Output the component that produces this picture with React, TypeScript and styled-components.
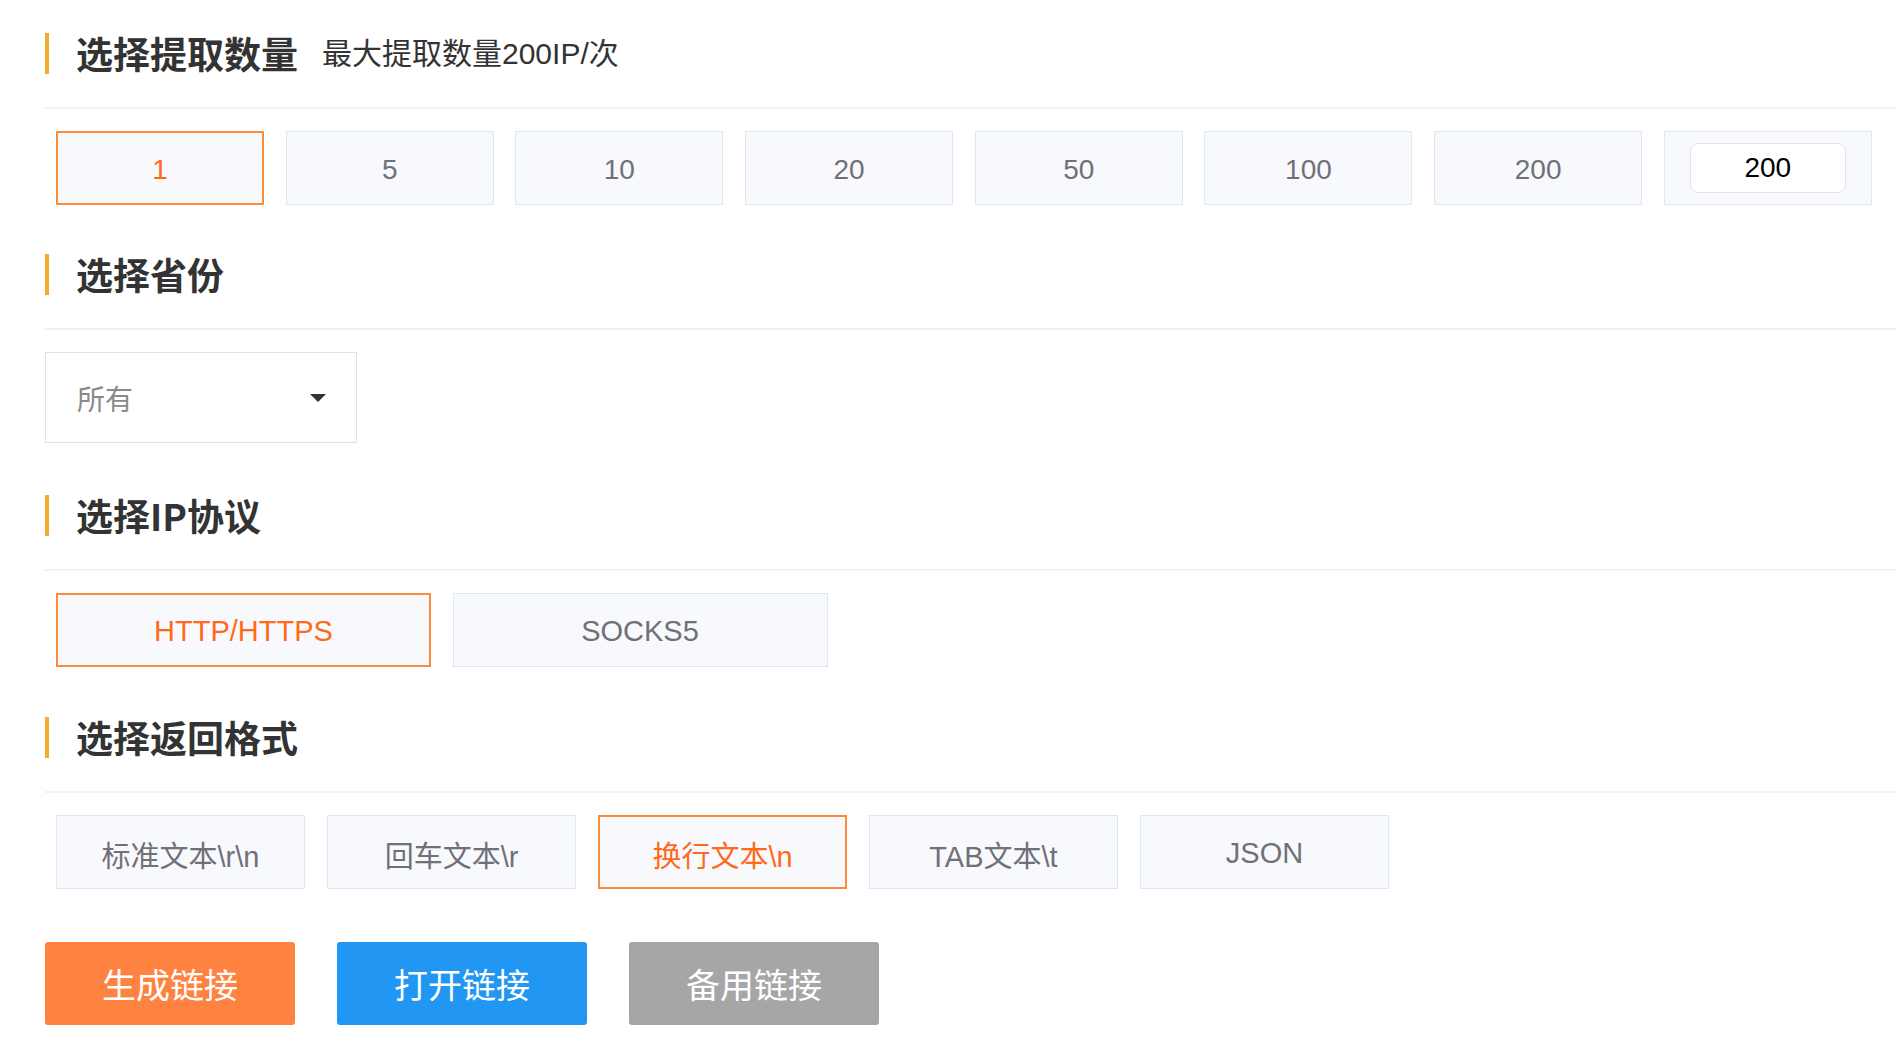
import React, { useState } from "react";
import styled, { createGlobalStyle, css } from "styled-components";

const GlobalStyle = createGlobalStyle`
  html, body {
    margin: 0;
    padding: 0;
    background: #ffffff;
  }
  body {
    font-family: "Liberation Sans", "Noto Sans CJK SC", sans-serif;
    color: #333333;
  }
  * { box-sizing: border-box; }
`;

const Page = styled.div`
  padding: 33px 0 0 45px;
  width: 1896px;
  height: 1062px;
  overflow: hidden;
`;

const Section = styled.section<{ $gapAfter: number }>`
  margin-bottom: ${(p) => p.$gapAfter}px;
`;

const Header = styled.div`
  display: flex;
  align-items: center;
  height: 41px;
  border-left: 4px solid #f0ad2e;
  padding-left: 27px;
`;

const Title = styled.h2`
  margin: 0;
  font-size: 37px;
  font-weight: bold;
  color: #333333;
  line-height: 41px;
  font-family: "Noto Sans CJK SC", "Liberation Sans", sans-serif;
`;

const SubTitle = styled.span`
  margin-left: 24px;
  font-size: 30px;
  color: #333333;
  font-family: "Liberation Sans", "Noto Sans CJK SC", sans-serif;
  line-height: 41px;
`;

const Divider = styled.div`
  margin-top: 33px;
  height: 2px;
  background: #f2f2f2;
`;

const Body = styled.div<{ $indent: number }>`
  padding-top: 22px;
  padding-left: ${(p) => p.$indent}px;
`;

const OptionRow = styled.div<{ $gap: number }>`
  display: flex;
  gap: ${(p) => p.$gap}px;
`;

const OptionButton = styled.div<{ $width: number; $size?: number; $active?: boolean }>`
  width: ${(p) => p.$width}px;
  height: 74px;
  display: flex;
  align-items: center;
  justify-content: center;
  padding-top: 3px;
  background: #f8f9fd;
  border: 1px solid #dde7f1;
  font-size: ${(p) => p.$size ?? 28}px;
  color: #707078;
  cursor: pointer;
  ${(p) =>
    p.$active &&
    css`
      border: 2px solid #ff8a3d;
      color: #ff6a1a;
    `}
`;

const NumberInput = styled.input`
  width: 156px;
  height: 50px;
  margin-top: -3px;
  border: 1px solid #e2e2e2;
  border-radius: 8px;
  background: #ffffff;
  text-align: center;
  font-size: 28px;
  color: #000000;
  font-family: "Liberation Sans", sans-serif;
  outline: none;
`;

const SelectBox = styled.div`
  width: 312px;
  height: 91px;
  border: 1px solid #dde2e6;
  display: flex;
  align-items: center;
  justify-content: space-between;
  padding: 0 30px 0 31px;
  font-size: 28px;
  color: #8a8a8a;
  font-family: "Noto Sans CJK SC", sans-serif;
`;

const Caret = styled.span`
  width: 0;
  height: 0;
  border-left: 8px solid transparent;
  border-right: 8px solid transparent;
  border-top: 8px solid #333333;
`;

const ActionRow = styled.div`
  display: flex;
  gap: 42px;
`;

const ActionButton = styled.button<{ $bg: string }>`
  width: 250px;
  height: 83px;
  border: none;
  border-radius: 3px;
  background: ${(p) => p.$bg};
  color: #ffffff;
  font-size: 34px;
  font-family: "Noto Sans CJK SC", sans-serif;
  cursor: pointer;
  display: flex;
  align-items: center;
  justify-content: center;
  padding: 0;
`;

const quantities = ["1", "5", "10", "20", "50", "100", "200"];
const protocols = ["HTTP/HTTPS", "SOCKS5"];
const formats = ["标准文本\\r\\n", "回车文本\\r", "换行文本\\n", "TAB文本\\t", "JSON"];

export default function App() {
  const [qty, setQty] = useState(0);
  const [proto, setProto] = useState(0);
  const [fmt, setFmt] = useState(2);
  const [custom, setCustom] = useState("200");

  return (
    <>
      <GlobalStyle />
      <Page>
        <Section $gapAfter={49}>
          <Header>
            <Title>选择提取数量</Title>
            <SubTitle>最大提取数量200IP/次</SubTitle>
          </Header>
          <Divider />
          <Body $indent={11}>
            <OptionRow $gap={21.7}>
              {quantities.map((q, i) => (
                <OptionButton key={q + i} $width={208} $active={qty === i} onClick={() => setQty(i)}>
                  {q}
                </OptionButton>
              ))}
              <OptionButton $width={208}>
                <NumberInput value={custom} onChange={(e) => setCustom(e.target.value)} />
              </OptionButton>
            </OptionRow>
          </Body>
        </Section>

        <Section $gapAfter={52}>
          <Header>
            <Title>选择省份</Title>
          </Header>
          <Divider />
          <Body $indent={0}>
            <SelectBox>
              <span>所有</span>
              <Caret />
            </SelectBox>
          </Body>
        </Section>

        <Section $gapAfter={50}>
          <Header>
            <Title>选择IP协议</Title>
          </Header>
          <Divider />
          <Body $indent={11}>
            <OptionRow $gap={21.5}>
              {protocols.map((p, i) => (
                <OptionButton key={p} $width={375} $size={29} $active={proto === i} onClick={() => setProto(i)}>
                  {p}
                </OptionButton>
              ))}
            </OptionRow>
          </Body>
        </Section>

        <Section $gapAfter={53}>
          <Header>
            <Title>选择返回格式</Title>
          </Header>
          <Divider />
          <Body $indent={11}>
            <OptionRow $gap={22}>
              {formats.map((f, i) => (
                <OptionButton key={f} $width={249} $size={29} $active={fmt === i} onClick={() => setFmt(i)}>
                  {f}
                </OptionButton>
              ))}
            </OptionRow>
          </Body>
        </Section>

        <ActionRow>
          <ActionButton $bg="#ff8340">生成链接</ActionButton>
          <ActionButton $bg="#2196f3">打开链接</ActionButton>
          <ActionButton $bg="#a6a6a6">备用链接</ActionButton>
        </ActionRow>
      </Page>
    </>
  );
}
